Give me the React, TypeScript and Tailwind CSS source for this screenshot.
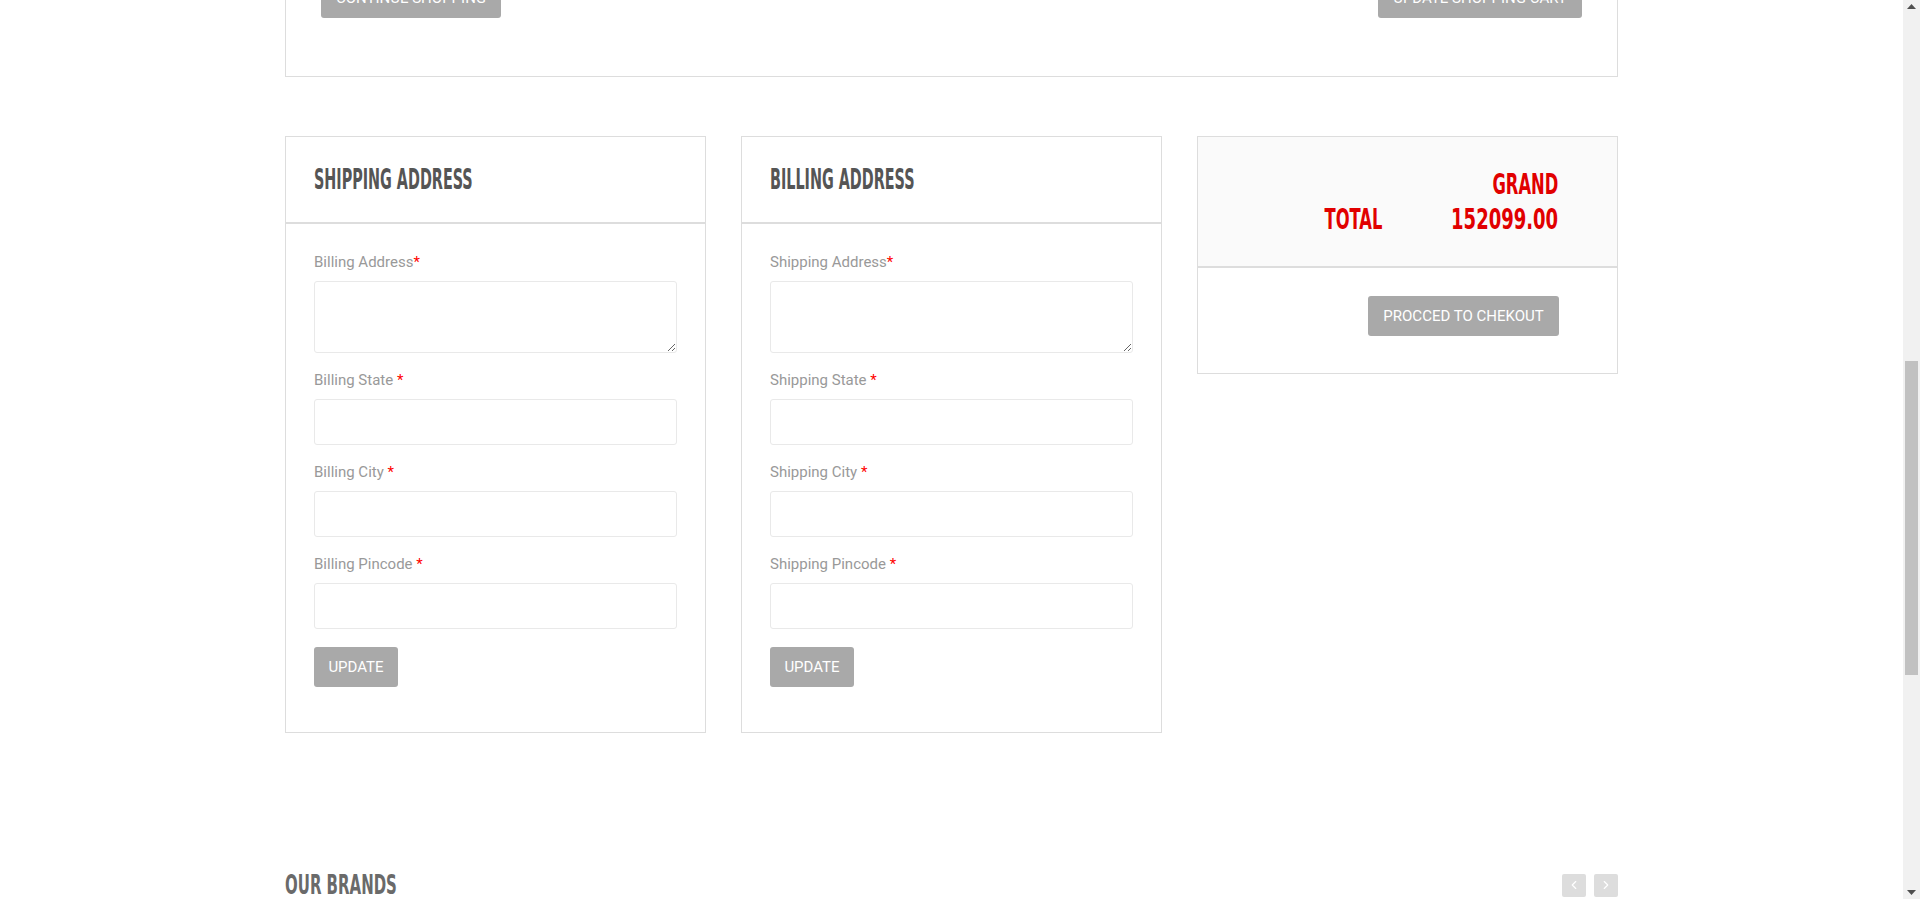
import { ChevronLeft, ChevronRight } from "lucide-react";

const shippingFields = [
  ["Billing Address", "area"],
  ["Billing State", "text"],
  ["Billing City", "text"],
  ["Billing Pincode", "text"],
] as const;

const billingFields = [
  ["Shipping Address", "area"],
  ["Shipping State", "text"],
  ["Shipping City", "text"],
  ["Shipping Pincode", "text"],
] as const;

const heading = "font-['Liberation_Sans_Narrow','DejaVu_Sans_Condensed',sans-serif] font-bold";
const body = "font-['Roboto','Liberation_Sans',sans-serif]";

function GreyButton({ children, className = "" }: { children: React.ReactNode; className?: string }) {
  return (
    <button
      type="button"
      className={`h-10 rounded-[3px] bg-[#a9a9a9] text-[15px] uppercase text-white ${body} ${className}`}
    >
      {children}
    </button>
  );
}

function AddressCard({ title, fields }: { title: string; fields: readonly (readonly [string, string])[] }) {
  return (
    <div className="border border-[#dddddd] bg-white">
      <div className="flex h-[85px] items-center px-[28px]">
        <h3 className={`${heading} inline-block origin-left scale-x-[0.57] whitespace-nowrap text-[28px] leading-none text-[#555555]`}>
          {title}
        </h3>
      </div>
      <div className="border-t-2 border-[#dddddd] px-[28px] pb-[45px] pt-[28px]">
        <div className="flex flex-col gap-[17px]">
          {fields.map(([label, kind]) => (
            <div key={label} className="flex flex-col">
              <label className={`${body} mb-[9px] text-[15px] leading-[20px] text-[#999999]`}>
                {label}
                {kind === "area" ? "" : " "}
                <span className="text-[#ff0000]">*</span>
              </label>
              {kind === "area" ? (
                <textarea className="h-[72px] w-full rounded-[3px] border border-[#e9e9e9] bg-white outline-none" />
              ) : (
                <input className="h-[46px] w-full rounded-[3px] border border-[#e9e9e9] bg-white outline-none" />
              )}
            </div>
          ))}
        </div>
        <GreyButton className="mt-[18px] w-[84px]">Update</GreyButton>
      </div>
    </div>
  );
}

function TotalCard() {
  return (
    <div className="self-start border border-[#dddddd] bg-white">
      <div className="flex h-[129px] items-center justify-end bg-[#fafafa] pr-[59px]">
        <div className={`${heading} flex items-end gap-[21px] text-[29px] leading-[35px] text-[#e10000]`}>
          <span className="inline-block origin-right scale-x-[0.626]">TOTAL</span>
          <div className="flex flex-col items-end">
            <span className="inline-block origin-right scale-x-[0.625]">GRAND</span>
            <span className="inline-block origin-right scale-x-[0.69]">152099.00</span>
          </div>
        </div>
      </div>
      <div className="flex justify-end border-t-2 border-[#dddddd] pb-[37px] pr-[58px] pt-[28px]">
        <GreyButton className="w-[191px]">Procced to chekout</GreyButton>
      </div>
    </div>
  );
}

function Scrollbar() {
  return (
    <div className="flex h-full w-[17px] shrink-0 flex-col bg-[#f1f1f1]">
      <div className="flex h-[17px] items-start justify-center pt-[4px]">
        <svg width="9" height="5" viewBox="0 0 9 5">
          <path d="M4.5 0 L9 5 L0 5 Z" fill="#505050" />
        </svg>
      </div>
      <div className="h-[344px]" />
      <div className="mx-[2px] h-[314px] bg-[#c1c1c1]" />
      <div className="flex-1" />
      <div className="flex h-[17px] items-end justify-center pb-[4px]">
        <svg width="9" height="5" viewBox="0 0 9 5">
          <path d="M0 0 L9 0 L4.5 5 Z" fill="#505050" />
        </svg>
      </div>
    </div>
  );
}

export default function App() {
  return (
    <div className="flex h-[899px] overflow-hidden bg-white">
      <main className="min-w-0 flex-1">
        <div className="mx-auto w-[1333px]">
          <div className="-mt-[22px] flex justify-between border-x border-b border-[#dddddd] px-[35px] pb-[58px]">
            <GreyButton className="w-[180px]">Continue shopping</GreyButton>
            <GreyButton className="w-[204px]">Update shopping cart</GreyButton>
          </div>

          <div className="mt-[59px] grid grid-cols-3 gap-[35px]">
            <AddressCard title="SHIPPING ADDRESS" fields={shippingFields} />
            <AddressCard title="BILLING ADDRESS" fields={billingFields} />
            <TotalCard />
          </div>

          <div className="mt-[140px] flex items-center justify-between">
            <h2 className={`${heading} inline-block origin-left scale-x-[0.64] whitespace-nowrap text-[26px] leading-[24px] text-[#6a6a6a]`}>
              OUR BRANDS
            </h2>
            <div className="flex gap-[8px]">
              <button type="button" className="grid h-[23px] w-[24px] place-items-center rounded-[2px] bg-[#dddddd] text-white">
                <ChevronLeft size={14} strokeWidth={2} />
              </button>
              <button type="button" className="grid h-[23px] w-[24px] place-items-center rounded-[2px] bg-[#dddddd] text-white">
                <ChevronRight size={14} strokeWidth={2} />
              </button>
            </div>
          </div>
        </div>
      </main>
      <Scrollbar />
    </div>
  );
}
